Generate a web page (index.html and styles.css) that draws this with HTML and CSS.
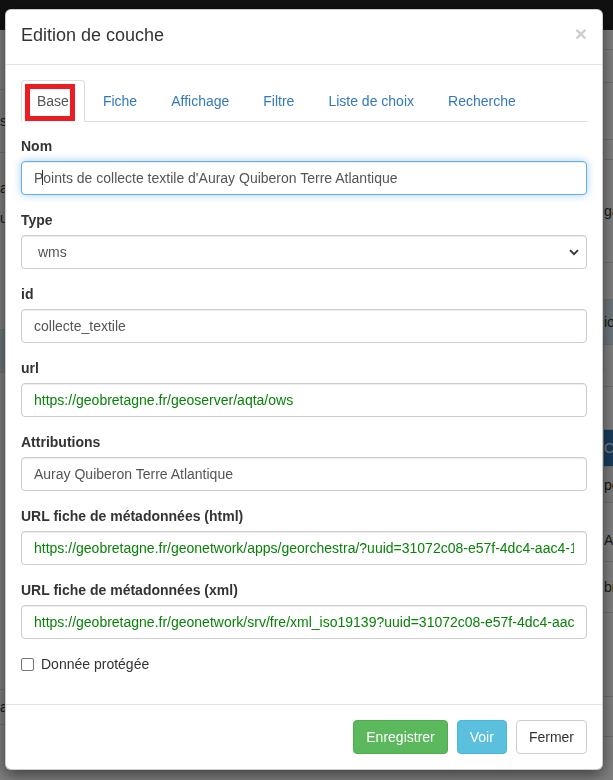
FILE: index.html
```html
<!DOCTYPE html>
<html lang="fr">
<head>
<meta charset="utf-8">
<title>Edition de couche</title>
<link rel="stylesheet" href="styles.css">
</head>
<body>
<div class="page">
  <div class="navbar"></div>
  <div class="panels">
    <div class="panel panel-left">
      <div class="prow l1"></div>
      <div class="prow l2">s</div>
      <div class="prow l3"><div>a</div><div>u</div></div>
      <div class="prow l4"></div>
      <div class="prow l5 band-info"></div>
      <div class="prow l6"></div>
      <div class="prow l7">a</div>
    </div>
    <div class="panel panel-right">
      <div class="prow r1"></div>
      <div class="prow r2"></div>
      <div class="prow r3"></div>
      <div class="prow r4"></div>
      <div class="prow r5">ga</div>
      <div class="prow r6"></div>
      <div class="prow r7 band-info">io</div>
      <div class="prow r8"></div>
      <div class="prow r9"></div>
      <div class="prow r10 band-primary">C</div>
      <div class="prow r11 band-light">pe</div>
      <div class="prow r12">Atl</div>
      <div class="prow r13">bi</div>
      <div class="prow r14"></div>
      <div class="prow r15"></div>
    </div>
  </div>
</div>
<div class="backdrop"></div>

<div class="modal">
  <div class="modal-header">
    <h4 class="modal-title">Edition de couche</h4>
    <button class="close" type="button">&times;</button>
  </div>
  <div class="modal-body">
    <ul class="nav-tabs">
      <li class="active"><a href="#">Base</a><span class="annot"></span></li>
      <li><a href="#">Fiche</a></li>
      <li><a href="#">Affichage</a></li>
      <li><a href="#">Filtre</a></li>
      <li><a href="#">Liste de choix</a></li>
      <li><a href="#">Recherche</a></li>
    </ul>
    <div class="tab-pane">
      <div class="form-group">
        <label>Nom</label>
        <div class="field">
          <input class="form-control focus" type="text" value="Points de collecte textile d'Auray Quiberon Terre Atlantique">
          <span class="caret-mark"></span>
        </div>
      </div>
      <div class="form-group">
        <label>Type</label>
        <div class="field">
          <select class="form-control select"><option>wms</option></select>
          <svg class="chevron" width="10" height="7" viewBox="0 0 10 7"><path d="M1 1.2 L5 5.2 L9 1.2" fill="none" stroke="#333" stroke-width="1.8"/></svg>
        </div>
      </div>
      <div class="form-group">
        <label>id</label>
        <input class="form-control" type="text" value="collecte_textile">
      </div>
      <div class="form-group">
        <label>url</label>
        <input class="form-control url" type="text" value="https://geobretagne.fr/geoserver/aqta/ows">
      </div>
      <div class="form-group">
        <label>Attributions</label>
        <input class="form-control" type="text" value="Auray Quiberon Terre Atlantique">
      </div>
      <div class="form-group">
        <label>URL fiche de métadonnées (html)</label>
        <input class="form-control url" type="text" value="https://geobretagne.fr/geonetwork/apps/georchestra/?uuid=31072c08-e57f-4dc4-aac4-1b2c3d4e5f60">
      </div>
      <div class="form-group">
        <label>URL fiche de métadonnées (xml)</label>
        <input class="form-control url" type="text" value="https://geobretagne.fr/geonetwork/srv/fre/xml_iso19139?uuid=31072c08-e57f-4dc4-aac4-1b2c3d4e5f60">
      </div>
      <div class="form-group checkbox">
        <label><input type="checkbox"> Donnée protégée</label>
      </div>
    </div>
  </div>
  <div class="modal-footer">
    <button class="btn btn-success" type="button">Enregistrer</button>
    <button class="btn btn-info" type="button">Voir</button>
    <button class="btn btn-default" type="button">Fermer</button>
  </div>
</div>
</body>
</html>
```
FILE: styles.css
```css
html, body {
  margin: 0;
  padding: 0;
  height: 100%;
  overflow: hidden;
}
body {
  font-family: "Liberation Sans", Arial, Helvetica, sans-serif;
  font-size: 14px;
  line-height: 20px;
  color: #333;
  background: #fff;
}

/* background page */
.page {
  height: 780px;
  overflow: hidden;
}
.navbar {
  height: 30px;
  background: #222;
}
.panels {
  display: grid;
  grid-template-columns: 604px 1fr;
}
.panel {
  overflow: hidden;
  white-space: nowrap;
}
.prow {
  box-sizing: border-box;
  border-bottom: 1px solid #ddd;
  display: flex;
  flex-direction: column;
  justify-content: center;
}
.l1 { height: 60px; }
.l2 { height: 63px; }
.l3 { height: 147px; padding-top: 20px; justify-content: flex-start; line-height: 30px; border-bottom: 0; }
.l4 { height: 30px; }
.l5 { height: 43px; }
.l6 { height: 317px; }
.l7 { height: 35px; }
.r1 { height: 20px; }
.r2 { height: 33px; }
.r3 { height: 57px; }
.r4 { height: 20px; }
.r5 { height: 103px; }
.r6 { height: 37px; }
.r7 { height: 45px; }
.r8 { height: 42px; }
.r9 { height: 43px; }
.r10 { height: 37px; }
.r11 { height: 36px; }
.r12 { height: 59px; padding-top: 16px; }
.r13 { height: 51px; }
.r14 { height: 84px; }
.r15 { height: 40px; }
.band-info { background: #d9edf7; }
.band-primary { background: #337ab7; color: #fff; }
.band-light { background: #f5f5f5; }

.backdrop {
  position: fixed;
  inset: 0;
  background: rgba(0, 0, 0, 0.5);
}

/* modal */
.modal {
  position: absolute;
  top: 9px;
  left: 5px;
  width: 598px;
  box-sizing: border-box;
  background: #fff;
  border: 1px solid rgba(0, 0, 0, 0.2);
  border-radius: 6px;
  box-shadow: 0 5px 15px rgba(0, 0, 0, 0.5);
}
.modal-header {
  display: flex;
  justify-content: space-between;
  align-items: flex-start;
  padding: 12px 15px 16px;
  border-bottom: 1px solid #e5e5e5;
}
.modal-title {
  margin: 0;
  font-size: 18px;
  font-weight: normal;
  line-height: 26px;
  color: #333;
}
.close {
  margin: 1px 0 0;
  padding: 0;
  border: 0;
  background: none;
  font-family: inherit;
  font-size: 21px;
  font-weight: bold;
  line-height: 21px;
  color: #000;
  opacity: 0.2;
}
.modal-body {
  padding: 15px;
}
.nav-tabs {
  display: flex;
  list-style: none;
  margin: 0;
  padding: 0;
  border-bottom: 1px solid #ddd;
}
.nav-tabs li {
  position: relative;
  margin: 0 2px -1px 0;
}
.nav-tabs a {
  display: block;
  padding: 10px 15px;
  line-height: 20px;
  border: 1px solid transparent;
  border-radius: 4px 4px 0 0;
  color: #337ab7;
  text-decoration: none;
}
.nav-tabs li.active a {
  color: #555;
  background: #fff;
  border-color: #ddd #ddd transparent;
}
.annot {
  position: absolute;
  left: 4px;
  top: 4px;
  width: 50px;
  height: 37px;
  box-sizing: border-box;
  border: 5px solid #ec1c24;
}
.tab-pane {
  padding-top: 14px;
}
.form-group {
  margin-bottom: 15px;
}
label {
  display: block;
  margin-bottom: 5px;
  font-weight: bold;
}
.field {
  position: relative;
}
.form-control {
  display: block;
  width: 100%;
  height: 34px;
  box-sizing: border-box;
  padding: 6px 12px;
  font-family: inherit;
  font-size: 14px;
  line-height: 20px;
  color: #555;
  background: #fff;
  border: 1px solid #ccc;
  border-radius: 4px;
  box-shadow: inset 0 1px 1px rgba(0, 0, 0, 0.075);
  outline: 0;
}
.form-control.focus {
  border-color: #66afe9;
  box-shadow: inset 0 1px 1px rgba(0, 0, 0, 0.075), 0 0 8px rgba(102, 175, 233, 0.6);
}
.form-control.url {
  color: #0a820a;
}
.caret-mark {
  position: absolute;
  left: 21px;
  top: 9px;
  width: 1px;
  height: 15px;
  background: #333;
}
.select {
  appearance: none;
  -webkit-appearance: none;
  padding-left: 16px;
}
.chevron {
  position: absolute;
  right: 8px;
  top: 14px;
}
.checkbox label {
  display: flex;
  align-items: center;
  gap: 7px;
  margin: 0;
  font-weight: normal;
}
.checkbox input {
  appearance: none;
  -webkit-appearance: none;
  width: 13px;
  height: 13px;
  margin: 0;
  box-sizing: border-box;
  border: 1px solid #767676;
  border-radius: 2px;
  background: #fff;
}
.modal-footer {
  display: flex;
  justify-content: flex-end;
  gap: 9px;
  padding: 15px;
  border-top: 1px solid #e5e5e5;
}
.btn {
  padding: 6px 12px;
  font-family: inherit;
  font-size: 14px;
  line-height: 20px;
  border: 1px solid transparent;
  border-radius: 4px;
}
.btn-success {
  color: #fff;
  background: #5cb85c;
  border-color: #4cae4c;
}
.btn-info {
  color: #fff;
  background: #5bc0de;
  border-color: #46b8da;
}
.btn-default {
  color: #333;
  background: #fff;
  border-color: #ccc;
}
```
